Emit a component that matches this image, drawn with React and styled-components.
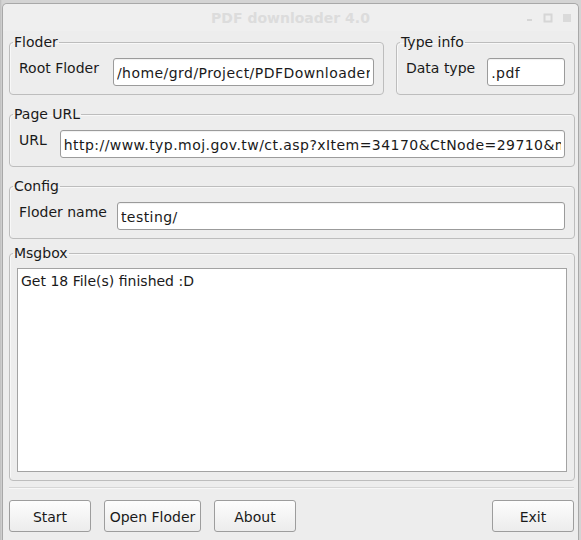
import React from 'react';
import styled, { createGlobalStyle } from 'styled-components';

const GlobalStyle = createGlobalStyle`
  html, body {
    margin: 0;
    padding: 0;
    background: #c9c9c9;
    font-family: 'DejaVu Sans', sans-serif;
    font-size: 14px;
    color: #1a1a1a;
  }
`;

const Desktop = styled.div`
  width: 581px;
  height: 540px;
  overflow: hidden;
  padding-top: 3px;
  box-sizing: border-box;
  background: linear-gradient(to right, #bcbcbc 0, #d4d4d4 2px, #d4d4d4 100%);
`;

const Window = styled.div`
  margin-left: 2px;
  width: 577px;
  height: 540px;
  box-sizing: border-box;
  border: 1px solid #a8a8a8;
  border-bottom: none;
  border-radius: 5px 5px 0 0;
  background: #ededed;
  display: flex;
  flex-direction: column;
`;

const TitleBar = styled.div`
  height: 27px;
  flex: none;
  display: flex;
  align-items: center;
  justify-content: center;
  position: relative;
  background: #efefef;
  border-radius: 5px 5px 0 0;
  color: #dcdcdc;
  font-weight: bold;
  font-size: 14px;
`;

const WinButtons = styled.div`
  position: absolute;
  right: 6px;
  top: 9px;
  display: flex;
  gap: 9px;
  align-items: center;
`;

const Body = styled.div`
  padding: 3px 3px 0 6px;
  display: flex;
  flex-direction: column;
`;

const TopRow = styled.div`
  display: flex;
  gap: 12px;
`;

const Group = styled.fieldset`
  margin: ${(p) => p.mt || 0}px 0 0 0;
  padding: 8px 9px 8px 9px;
  border: 1px solid #bdbdbd;
  border-radius: 4px;
  box-shadow: inset 1px 1px 0 #f8f8f8;
  min-width: 0;
  flex: ${(p) => (p.width ? 'none' : '1')};
  width: ${(p) => (p.width ? p.width + 'px' : 'auto')};
  box-sizing: border-box;
  display: flex;
  flex-direction: column;
`;

const Legend = styled.legend`
  margin-left: -6px;
  padding: 0 1px;
  line-height: 16px;
  font-size: 14px;
  color: #1a1a1a;
`;

const Row = styled.div`
  display: flex;
  align-items: center;
  gap: ${(p) => p.gap || 13}px;
`;

const Label = styled.span`
  flex: none;
  white-space: nowrap;
  margin-top: -8px;
`;

const Field = styled.input`
  flex: 1;
  min-width: 0;
  height: 28px;
  box-sizing: border-box;
  border: 1px solid #9b9b9b;
  border-radius: 3px;
  background: #fff;
  padding: 2px 3px 0 3px;
  font-family: 'DejaVu Sans', sans-serif;
  font-size: 14px;
  letter-spacing: 0.45px;
  color: #1a1a1a;
  outline: none;
  box-shadow: inset 0 1px 1px rgba(0, 0, 0, 0.06);
`;

const MsgArea = styled.textarea`
  margin: -1px -2px 0 -2px;
  height: 204px;
  box-sizing: border-box;
  border: 1px solid #a3a3a3;
  background: #fff;
  padding: 4px 3px;
  resize: none;
  font-family: 'DejaVu Sans', sans-serif;
  font-size: 14px;
  line-height: 17px;
  color: #1a1a1a;
  outline: none;
`;

const Separator = styled.div`
  margin: 6px 0 0 0;
  height: 1px;
  border-top: 1px solid #d6d6d6;
  background: #f7f7f7;
  width: 565px;
`;

const ButtonBar = styled.div`
  display: flex;
  gap: 13px;
  margin-top: 11px;
  width: 565px;
`;

const Spacer = styled.div`
  flex: 1;
`;

const Button = styled.button`
  width: ${(p) => p.w || 82}px;
  height: 32px;
  box-sizing: border-box;
  border: 1px solid #9d9d9d;
  border-radius: 3px;
  background: linear-gradient(#fdfdfd, #ececec);
  font-family: 'DejaVu Sans', sans-serif;
  font-size: 14px;
  color: #1a1a1a;
  padding: 2px 0 0 0;
`;

const Minimize = () => (
  <svg width="8" height="8" viewBox="0 0 8 8">
    <rect x="1" y="5" width="5" height="2" fill="#d6d6d6" />
  </svg>
);

const Maximize = () => (
  <svg width="10" height="10" viewBox="0 0 10 10">
    <rect x="1.5" y="1.5" width="7" height="7" fill="none" stroke="#d6d6d6" strokeWidth="2" />
  </svg>
);

const Close = () => (
  <svg width="10" height="10" viewBox="0 0 10 10">
    <rect x="1" y="1" width="8" height="8" fill="#dadada" />
  </svg>
);

export default function App() {
  return (
    <>
      <GlobalStyle />
      <Desktop>
        <Window>
          <TitleBar>
            PDF downloader 4.0
            <WinButtons>
              <Minimize />
              <Maximize />
              <Close />
            </WinButtons>
          </TitleBar>
          <Body>
            <TopRow>
              <Group>
                <Legend>Floder</Legend>
                <Row gap={14}>
                  <Label>Root Floder</Label>
                  <Field readOnly defaultValue="/home/grd/Project/PDFDownloader" />
                </Row>
              </Group>
              <Group width={179}>
                <Legend>Type info</Legend>
                <Row gap={12}>
                  <Label>Data type</Label>
                  <Field readOnly defaultValue=".pdf" />
                </Row>
              </Group>
            </TopRow>
            <Group mt={11}>
              <Legend>Page URL</Legend>
              <Row gap={13}>
                <Label>URL</Label>
                <Field
                  readOnly
                  defaultValue="http://www.typ.moj.gov.tw/ct.asp?xItem=34170&CtNode=29710&mp=012"
                />
              </Row>
            </Group>
            <Group mt={11}>
              <Legend>Config</Legend>
              <Row gap={10}>
                <Label>Floder name</Label>
                <Field readOnly defaultValue="testing/" />
              </Row>
            </Group>
            <Group mt={6}>
              <Legend>Msgbox</Legend>
              <MsgArea readOnly defaultValue="Get 18 File(s) finished :D" />
            </Group>
            <Separator />
            <ButtonBar>
              <Button>Start</Button>
              <Button w={97}>Open Floder</Button>
              <Button>About</Button>
              <Spacer />
              <Button>Exit</Button>
            </ButtonBar>
          </Body>
        </Window>
      </Desktop>
    </>
  );
}
